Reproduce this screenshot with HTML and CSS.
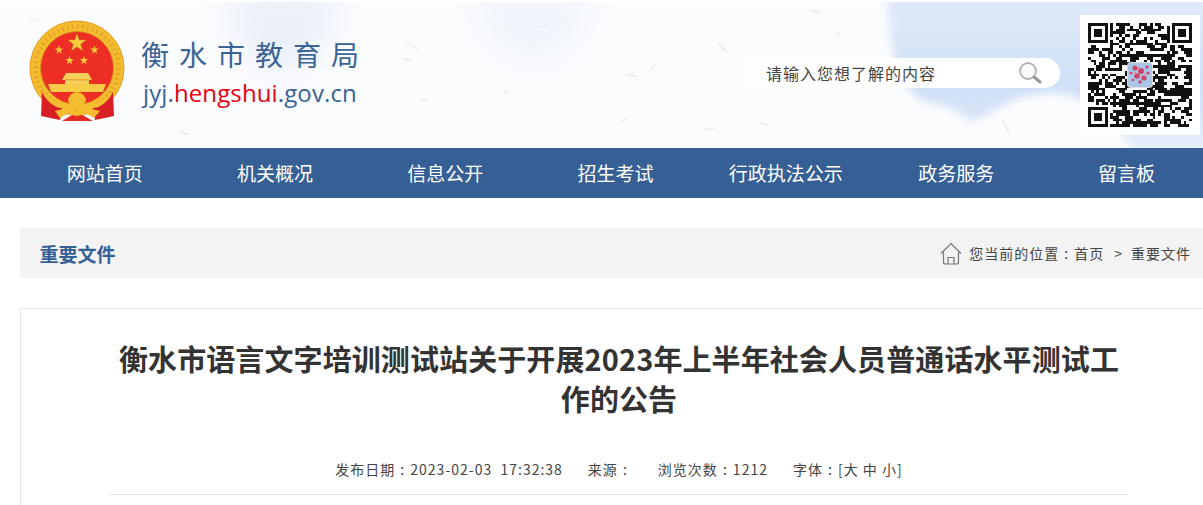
FILE: index.html
```html
<!DOCTYPE html>
<html lang="zh-CN">
<head>
  <meta charset="UTF-8" />
  <title>衡水市教育局</title>
  <link rel="stylesheet" href="styles.css">
</head>
<body>

  <header class="top">
    <!-- watercolour backdrop -->
    <svg class="top-bg" width="1203" height="146" viewBox="0 0 1203 146" aria-hidden="true">
      <defs>
        <filter id="soft" x="-20%" y="-20%" width="140%" height="140%"><feGaussianBlur stdDeviation="4"/></filter>
        <filter id="softer" x="-50%" y="-50%" width="200%" height="200%"><feGaussianBlur stdDeviation="16"/></filter>
        <linearGradient id="wash" x1="0" y1="0" x2="0" y2="1">
          <stop offset="0" stop-color="#e0eaf9"/>
          <stop offset=".6" stop-color="#cfdff6"/>
          <stop offset="1" stop-color="#e6eefa"/>
        </linearGradient>
      </defs>
      <path filter="url(#softer)" fill="#eaf0fa" d="M225 -10H335C345 20 320 50 295 70C265 75 245 50 235 30Z"/>
      <path filter="url(#softer)" fill="#f1f5fc" d="M470 -10H590C590 30 570 60 530 60C490 55 480 25 470 -10Z"/>
      <path filter="url(#soft)" fill="url(#wash)" d="M886 -6H1210V150H1135C1120 130 1100 105 1075 95C1060 88 1040 92 1020 95C1005 102 985 115 972 120C955 108 945 102 925 100C905 90 898 70 892 45Z"/>
      <g stroke="#dfe4ea" stroke-width="1" fill="none">
        <path d="M405 40l13 7M403 57l8 1M420 98l8 0M502 92l6-4M540 25l8-2M627 72l11 3M650 68l5-6M718 40l6 9M810 8l10 3M835 33l6-3M722 45l6 5M905 45l6-6M758 120l10 3M705 128l10-2M1003 118l6 14M1010 95l10 5M620 120l8-4M1040 10l8 5M965 30l8 8M30 20l8-3M180 130l10 3"/>
      </g>
    </svg>

    <a class="logo" href="#">
      <svg class="emblem" width="98" height="102" viewBox="0 0 98 102">
        <defs>
          <polygon id="star" points="0,-10 2.350,-3.240 9.510,-3.090 3.800,1.240 5.880,8.090 0,4 -5.880,8.090 -3.800,1.240 -9.510,-3.090 -2.350,-3.240"/>
        </defs>
        <circle cx="48" cy="48" r="47" fill="#f4bd30" stroke="#e39a1d" stroke-width="1"/>
        <circle cx="48" cy="48" r="41.500" fill="none" stroke="#e3a020" stroke-width="5" stroke-dasharray="2 3" opacity=".7"/>
        <circle cx="48" cy="48" r="36.500" fill="#ec2e25" stroke="#d98f1c" stroke-width="1"/>
        <g fill="#f7cb3e" stroke="#c98a1c" stroke-width=".05">
          <use href="#star" transform="translate(48 23) scale(.95)" stroke-width=".4"/>
          <use href="#star" transform="translate(30 30) scale(.45)"/>
          <use href="#star" transform="translate(65.500 30) scale(.45)"/>
          <use href="#star" transform="translate(40.500 40.500) scale(.45)"/>
          <use href="#star" transform="translate(55 40.500) scale(.45)"/>
        </g>
        <!-- gate -->
        <path fill="#f8cf5c" d="M37 53H59L63 60H60V66H36V60H33Z"/>
        <path fill="#e9a92a" d="M36 59h24v1.500H36z"/>
        <path fill="#f7cb45" d="M19 64H77L74 72H22Z"/>
        <path fill="#ec2e25" d="M24 72H72L70 76H26Z"/>
        <!-- gold base and ribbons -->
        <path fill="#f4bd30" d="M14 73C24 84 38 84 48 84C58 84 72 84 82 73L80 82C68 92 28 92 16 82Z"/>
        <path fill="#d81f24" d="M13 72C18 82 26 88 33 88L31 100L12 96Z"/>
        <path fill="#d81f24" d="M84 72C79 82 71 88 64 88L66 100L85 96Z"/>
        <path fill="#e52a25" d="M33 101L48 92L64 101Z"/>
        <path fill="#f4bd30" d="M48 72a9 9 0 0 1 9 9l-2 3H41l-2-3a9 9 0 0 1 9-9Z"/>
        <path fill="#f4bd30" d="M26 91L38 88L48 92L58 88L71 91L65 98L58 94L48 96L38 94L31 98Z"/>
      </svg>
      <div class="logo-text">
        <div class="logo-name">衡水市教育局</div>
        <div class="logo-url">jyj.<em>hengshui</em>.gov.cn</div>
      </div>
    </a>

    <form class="search">
      <span class="search-text">请输入您想了解的内容</span>
      <svg width="24" height="24" viewBox="0 0 24 24" fill="none" aria-hidden="true">
        <circle cx="10" cy="10" r="8" stroke="#b3b3b3" stroke-width="1.800" fill="#fafafa"/>
        <path d="M16 16l6 5" stroke="#999" stroke-width="3" stroke-linecap="round"/>
      </svg>
    </form>

    <div class="qr">
      <svg id="qrCode" width="104" height="104" viewBox="0 0 37 37" shape-rendering="crispEdges"></svg>
      <svg class="qr-photo" width="26" height="26" viewBox="0 0 26 26">
        <rect x=".5" y=".5" width="25" height="25" rx="3" fill="#a9c6e6" stroke="#ddd"/>
        <g fill="#c9476c">
          <circle cx="8" cy="6" r="2.500"/><circle cx="14" cy="9" r="3"/><circle cx="20" cy="5" r="1.600"/>
          <circle cx="10" cy="14" r="2.800"/><circle cx="17" cy="16" r="2.600"/><circle cx="4" cy="11" r="1.500"/>
          <circle cx="21" cy="11" r="1.600"/><circle cx="13" cy="20" r="1.800"/><circle cx="6" cy="18" r="1.300"/>
        </g>
        <g fill="#e98aa6">
          <circle cx="12" cy="6" r="1.200"/><circle cx="8" cy="11" r="1.200"/><circle cx="18" cy="13" r="1.200"/>
          <circle cx="14" cy="15" r="1"/>
        </g>
      </svg>
    </div>
  </header>

  <nav class="main-nav">
    <a href="#">网站首页</a>
    <a href="#">机关概况</a>
    <a href="#">信息公开</a>
    <a href="#">招生考试</a>
    <a href="#">行政执法公示</a>
    <a href="#">政务服务</a>
    <a href="#">留言板</a>
  </nav>

  <div class="crumb-bar">
    <h3>重要文件</h3>
    <div class="crumbs">
      <svg width="22" height="23" viewBox="0 0 22 23" fill="none" stroke="#777" stroke-width="1.200" aria-hidden="true">
        <path d="M1 11.500L11 1.500L21 11.500"/>
        <path d="M3.500 10V20a2 2 0 0 0 2 2H16.500a2 2 0 0 0 2-2V10"/>
        <path d="M8 22V15.500H14V22"/>
      </svg>
      <span>您当前的位置<i class="colon">:</i>首页</span>
      <span class="sep">&gt;</span>
      <span>重要文件</span>
    </div>
  </div>

  <main class="article">
    <h1>衡水市语言文字培训测试站关于开展2023年上半年社会人员普通话水平测试工作的公告</h1>
    <div class="meta">
      <span>发布日期<i class="colon">:</i>2023-02-03&nbsp;&nbsp;17:32:38</span>
      <span>来源<i class="colon">:</i></span>
      <span>浏览次数<i class="colon">:</i>1212</span>
      <span>字体<i class="colon">:</i>[大 中 小]</span>
    </div>
  </main>

  <script src="qr.js"></script>
</body>
</html>
```

FILE: styles.css
```css
* {
  box-sizing: border-box;
}

html, body {
  height: 505px;
  overflow: hidden;
}

body {
  margin: 0;
  background: #fff;
  color: #444;
  font-family: "Noto Sans CJK SC", "Noto Sans", sans-serif;
}

a {
  text-decoration: none;
  color: inherit;
}

.top {
  position: relative;
  height: 148px;
  padding-right: 3px;
  border-top: 2px solid #fff;
  background: #fbfcfe;
  display: flex;
  align-items: flex-start;
}

.top-bg {
  position: absolute;
  left: 0;
  top: 0;
}

.logo, .search, .qr {
  position: relative;
}

.logo {
  display: flex;
  align-items: flex-start;
  margin: 18px 0 0 29px;
}

.logo-text {
  margin: 14px 0 0 14px;
}

.logo-name {
  font-size: 28px;
  line-height: 40px;
  letter-spacing: 10px;
  color: #3a6396;
  white-space: nowrap;
}

.logo-url {
  padding-left: 2px;
  font-family: "Open Sans", sans-serif;
  font-size: 24px;
  letter-spacing: .12px;
  line-height: 38px;
  color: #3a6396;
}

.logo-url em {
  font-style: normal;
  color: #e60012;
}

.search {
  width: 320px;
  height: 30px;
  margin: 56px 0 0 auto;
  padding: 0 18px 0 26px;
  border-radius: 15px;
  background: linear-gradient(to right, rgba(255,255,255,0.2), #fff 30px);
  display: flex;
  align-items: center;
  justify-content: space-between;
}

.search-text {
  font-size: 16px;
  letter-spacing: 1px;
  color: #444;
}

.qr {
  width: 120px;
  height: 120px;
  margin: 13px 0 0 20px;
  background: #fff;
  display: flex;
  align-items: center;
  justify-content: center;
}

.qr-photo {
  position: absolute;
  left: 47px;
  top: 47px;
}

.main-nav {
  height: 50px;
  padding-left: 19.500px;
  background: #365f95;
  display: grid;
  grid-template-columns: repeat(7, 170.300px);
}

.main-nav a {
  color: #fff;
  font-size: 19px;
  line-height: 50px;
  text-align: center;
}

.crumb-bar {
  height: 50px;
  margin: 30px 0 0 20px;
  padding: 0 12px 0 19.500px;
  background: #f3f3f3;
  display: flex;
  align-items: center;
  justify-content: space-between;
}

.crumb-bar h3 {
  margin: 0;
  font-size: 19px;
  font-weight: bold;
  color: #365f95;
}

.crumbs {
  display: flex;
  align-items: center;
  font-size: 14px;
  letter-spacing: 1px;
  color: #444;
}

.crumbs svg {
  margin-right: 7px;
}

/* centred colon, the font's full-width one sits to the left */
.colon {
  display: inline-block;
  width: 15px;
  font-style: normal;
  text-align: center;
}

.sep {
  margin: 0 8px 0 10px;
}

.article {
  height: 197px;
  margin: 30px 0 0 20px;
  padding: 29px 75px 0 89px;
  border: 1px solid #e5e5e5;
  border-width: 1px 0 0 1px;
}

.article h1 {
  margin: 0;
  font-size: 29px;
  letter-spacing: .1px;
  line-height: 40px;
  font-weight: bold;
  text-align: center;
  color: #333;
}

.meta {
  margin-top: 39px;
  padding-bottom: 13px;
  border-bottom: 1px solid #e5e5e5;
  display: flex;
  justify-content: center;
  gap: 25px;
  font-size: 14px;
  letter-spacing: 1px;
  line-height: 24px;
  color: #444;
}
```

FILE: qr.js
```js
// draws the share code: three finder squares plus seeded noise
var SIZE = 37;
var svg = document.getElementById("qrCode");
var seed = 4217;

function rnd() {
  seed = (seed * 16807) % 2147483647;
  return seed / 2147483647;
}

function inFinder(x, y) {
  var left = x < 8, right = x >= SIZE - 8, top = y < 8, bottom = y >= SIZE - 8;
  return (left && top) || (right && top) || (left && bottom);
}

function finderOn(x, y) {
  var fx = x >= SIZE - 8 ? x - (SIZE - 7) : x;
  var fy = y >= SIZE - 8 ? y - (SIZE - 7) : y;
  if (fx < 0 || fy < 0 || fx > 6 || fy > 6) return false;
  if (fx === 0 || fy === 0 || fx === 6 || fy === 6) return true;
  return fx >= 2 && fx <= 4 && fy >= 2 && fy <= 4;
}

var d = "";
var prev = false;
for (var y = 0; y < SIZE; y++) {
  for (var x = 0; x < SIZE; x++) {
    // runs of black, the real code is blocky
    var on = inFinder(x, y) ? finderOn(x, y) : rnd() < (prev ? 0.68 : 0.48);
    prev = on;
    if (on) d += "M" + x + " " + y + "h1v1h-1z";
  }
}

var path = document.createElementNS("http://www.w3.org/2000/svg", "path");
path.setAttribute("d", d);
path.setAttribute("fill", "#111");
svg.appendChild(path);
```
